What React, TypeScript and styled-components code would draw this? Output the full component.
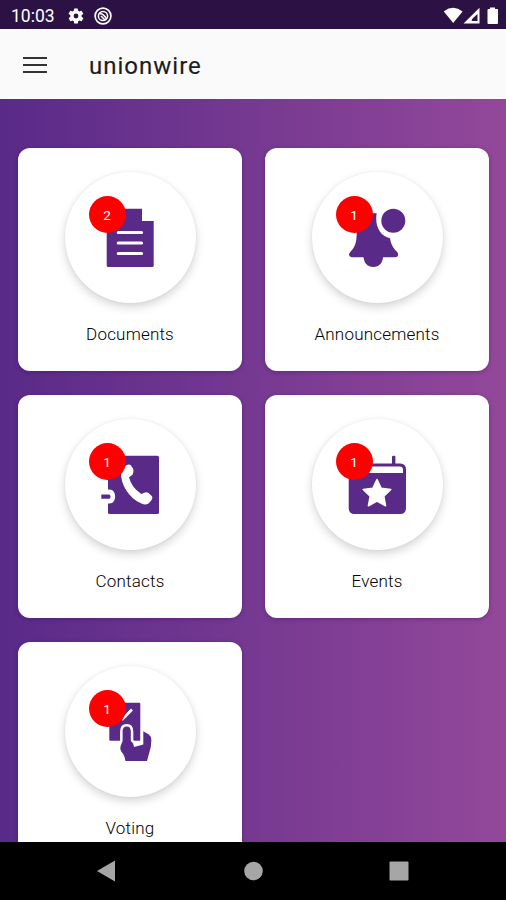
import React from 'react';
import styled, { createGlobalStyle } from 'styled-components';

const PURPLE = '#5a2a88';

const Global = createGlobalStyle`
  * { box-sizing: border-box; }
  body { margin: 0; background: #000; font-family: Roboto, sans-serif; }
`;

const Screen = styled.div`
  width: 506px;
  height: 900px;
  display: flex;
  flex-direction: column;
  overflow: hidden;
`;

const StatusBar = styled.div`
  flex: none;
  height: 29px;
  background: #2c1244;
  color: #fff;
  display: flex;
  align-items: center;
  justify-content: space-between;
  padding: 2px 8px 0 11px;
`;

const StatusGroup = styled.div<{ $gap: number }>`
  display: flex;
  align-items: center;
  gap: ${(p) => p.$gap}px;
`;

const Clock = styled.span`
  font-size: 17.5px;
  line-height: 20px;
  width: 47px;
  white-space: nowrap;
`;

const AppBar = styled.header`
  flex: none;
  height: 70px;
  background: #fafafa;
  display: flex;
  align-items: center;
  padding: 0 23px;
  gap: 42px;
`;

const Burger = styled.div`
  width: 24px;
  display: flex;
  flex-direction: column;
  gap: 5px;
  margin-top: 1px;
`;

const BurgerLine = styled.span`
  height: 2px;
  background: #333;
`;

const Title = styled.h1`
  margin: 3px 0 0;
  font-size: 24px;
  line-height: 30px;
  font-weight: 400;
  letter-spacing: 1px;
  -webkit-text-stroke: 0.15px #1c1c1c;
  color: #1c1c1c;
`;

const Content = styled.main`
  flex: none;
  height: 743px;
  overflow: hidden;
  padding: 49px 17px 0 18px;
  background: linear-gradient(90deg, #592a88 0%, #93489a 100%);
  display: grid;
  grid-template-columns: 224px 224px;
  grid-auto-rows: 223px;
  gap: 24px 23px;
`;

const Card = styled.section`
  background: #fff;
  border-radius: 12px;
  display: flex;
  flex-direction: column;
  align-items: center;
  padding-top: 24px;
  box-shadow: 0 1px 4px rgba(50, 0, 80, 0.35);
`;

const Disc = styled.div`
  position: relative;
  width: 131px;
  height: 131px;
  border-radius: 50%;
  background: #fff;
  box-shadow: 0 4px 10px rgba(0, 0, 0, 0.17), 0 0 3px rgba(0, 0, 0, 0.06);
`;

const Glyph = styled.svg`
  display: block;
  width: 131px;
  height: 131px;
`;

const Badge = styled.span`
  position: absolute;
  left: 24px;
  top: 24px;
  width: 37px;
  height: 37px;
  border-radius: 50%;
  background: #fe0000;
  color: #fff;
  font-size: 13.5px;
  font-weight: 400;
  line-height: 38px;
  text-align: center;
`;

const Label = styled.div`
  margin-top: 20px;
  font-size: 17px;
  line-height: 22px;
  font-weight: 300;
  letter-spacing: 0.2px;
  color: #000;
`;

const NavBar = styled.nav`
  flex: 1;
  background: #000;
  display: grid;
  grid-template-columns: 180px 146px 146px;
  align-items: center;
  justify-items: center;
`;

const NavIcon = styled.svg<{ $shift?: number }>`
  display: block;
  width: 22px;
  height: 22px;
  margin-left: ${(p) => p.$shift ?? 0}px;
  fill: #a6a6a6;
`;

const DocumentArt = () => (
  <>
    <path d="M43 36.7H77V49H88.7V93.5Q88.7 95 87.2 95H43.2Q41.7 95 41.7 93.5V38Q41.7 36.7 43 36.7Z" fill={PURPLE} />
    <path d="M53.3 60.5H76.5M53.3 71H76.5M53.3 81.5H76.5" stroke="#fff" strokeWidth="3.2" strokeLinecap="round" />
  </>
);

const BellArt = () => (
  <>
    <circle cx="81.3" cy="48.7" r="12" fill={PURPLE} />
    <path d="M64.7 41.3C62.5 54 68 64 78 66.3C79 73 81.5 76.5 85 79.7C87 82 86.3 85.2 83.5 85.2H71C70.6 91 67 95 61.3 95C55.6 95 52 91 51.6 85.2H40C37 85.2 36 82 38.5 79.7C43 75.5 44.7 70 44.7 61.3C44.7 51 50 43 59.5 41.3Z" fill={PURPLE} />
  </>
);

const ContactsArt = () => (
  <>
    <rect x="43" y="36.7" width="51" height="58.3" rx="1.6" fill={PURPLE} />
    <path d="M40 70.5H44.5C52 70.5 52 84.5 44.5 84.5H40Z" fill="#fff" />
    <path d="M36.3 75.4H44C46 75.4 46 79.8 44 79.8H36.3Z" fill={PURPLE} />
    <path d="M57 49L62 46Q64.5 45 66 46.5L68.3 50Q69 54 67.5 55.7L64 58.3Q66.5 68.5 76.3 75L80 73.4Q82 72.7 83.6 74L87 77.3Q88 79 86.6 81L83.5 84.4Q80.5 86.6 76.5 84.6C64 79 55.5 66 56 53Z" fill="#fff" />
  </>
);

const EventsArt = () => (
  <>
    <rect x="80" y="36.7" width="3.4" height="12" rx="1.2" fill={PURPLE} />
    <rect x="36.7" y="44.5" width="57.3" height="50.5" rx="5.5" fill={PURPLE} />
    <path d="M40 47.6H87.5Q91 47.6 91 51V54H40Z" fill="#fff" />
    <path d="M65 60.5L69.2 69.3L78.8 70.5L71.8 77.2L73.6 86.8L65 82.2L56.4 86.8L58.2 77.2L51.2 70.5L60.8 69.3Z" fill="#fff" stroke="#fff" strokeWidth="1.5" strokeLinejoin="round" />
  </>
);

const VotingArt = () => (
  <>
    <rect x="44.3" y="36.7" width="31" height="38" rx="1" fill={PURPLE} />
    <path d="M67 43.5L57.7 53L54 50" fill="none" stroke="#fff" strokeWidth="2.6" />
    <path d="M57.6 75V65.5Q57.6 60.6 61.7 60.6Q65.8 60.6 65.8 65.5V75L68.2 77.5L69 81L78.3 78.5V65.3L83.8 68.5Q86.5 70.5 86.4 74L85.8 81L82 95H60.5Q59.5 89 56.6 86Q54.5 83 55.6 80Z" fill={PURPLE} stroke="#fff" strokeWidth="5" strokeLinejoin="round" paintOrder="stroke" />
  </>
);

const items = [
  { label: 'Documents', count: 2, Art: DocumentArt },
  { label: 'Announcements', count: 1, Art: BellArt },
  { label: 'Contacts', count: 1, Art: ContactsArt },
  { label: 'Events', count: 1, Art: EventsArt },
  { label: 'Voting', count: 1, Art: VotingArt },
];

export default function App() {
  return (
    <>
      <Global />
      <Screen>
        <StatusBar>
          <StatusGroup $gap={9}>
            <Clock>10:03</Clock>
            <svg width="18" height="18" viewBox="0 0 24 24" fill="#fff">
              <path d="M19.4 13a7.5 7.5 0 0 0 0-2l2.1-1.6a.5.5 0 0 0 .1-.6l-2-3.5a.5.5 0 0 0-.6-.2l-2.5 1a7.3 7.3 0 0 0-1.7-1l-.4-2.6a.5.5 0 0 0-.5-.4h-4a.5.5 0 0 0-.5.4L9 5.1a7.7 7.7 0 0 0-1.7 1l-2.5-1a.5.5 0 0 0-.6.2l-2 3.5a.5.5 0 0 0 .1.6L4.5 11a7.9 7.9 0 0 0 0 2l-2.1 1.6a.5.5 0 0 0-.1.6l2 3.5c.1.2.4.3.6.2l2.5-1a7.3 7.3 0 0 0 1.7 1l.4 2.6c0 .2.2.4.5.4h4c.2 0 .5-.2.5-.4l.4-2.6a7.7 7.7 0 0 0 1.7-1l2.5 1c.2.1.5 0 .6-.2l2-3.5a.5.5 0 0 0-.1-.6zM12 15.2a3.2 3.2 0 1 1 0-6.4 3.2 3.2 0 0 1 0 6.4z" />
            </svg>
            <svg width="18" height="18" viewBox="0 0 18 18" fill="none" stroke="#fff">
              <circle cx="9" cy="9" r="7.9" strokeWidth="1.7" />
              <circle cx="9" cy="9" r="4.6" strokeWidth="1.5" />
              <path d="M5.5 7Q9 6 12.5 12M7 9L11 13" strokeWidth="1.5" />
            </svg>
          </StatusGroup>
          <StatusGroup $gap={1}>
            <svg width="54" height="18" viewBox="0 0 54 18" fill="#fff">
              <path d="M-.2 4.5Q9.2-2.8 18.6 4.5L9.2 16Z" />
              <path fillRule="evenodd" d="M19.5 16.5L35.5 .8V16.5ZM27.5 14H33.5V7L28.5 11.5Z" />
              <path d="M46 0.5H51V2H53.5Q54 2 54 3V16Q54 17 53 17H44.5Q43.5 17 43.5 16V3Q43.5 2 44.5 2H46Z" />
            </svg>
          </StatusGroup>
        </StatusBar>
        <AppBar>
          <Burger>
            <BurgerLine />
            <BurgerLine />
            <BurgerLine />
          </Burger>
          <Title>unionwire</Title>
        </AppBar>
        <Content>
          {items.map(({ label, count, Art }) => (
            <Card key={label}>
              <Disc>
                <Glyph viewBox="0 0 131 131">
                  <Art />
                </Glyph>
                <Badge>{count}</Badge>
              </Disc>
              <Label>{label}</Label>
            </Card>
          ))}
        </Content>
        <NavBar>
          <NavIcon $shift={32} viewBox="0 0 22 22">
            <path d="M2 11L20 .5V21.5Z" />
          </NavIcon>
          <NavIcon viewBox="0 0 22 22">
            <circle cx="11.5" cy="11" r="9.3" />
          </NavIcon>
          <NavIcon viewBox="0 0 22 22">
            <rect x="1.5" y="1.5" width="19" height="19" rx="1" />
          </NavIcon>
        </NavBar>
      </Screen>
    </>
  );
}
